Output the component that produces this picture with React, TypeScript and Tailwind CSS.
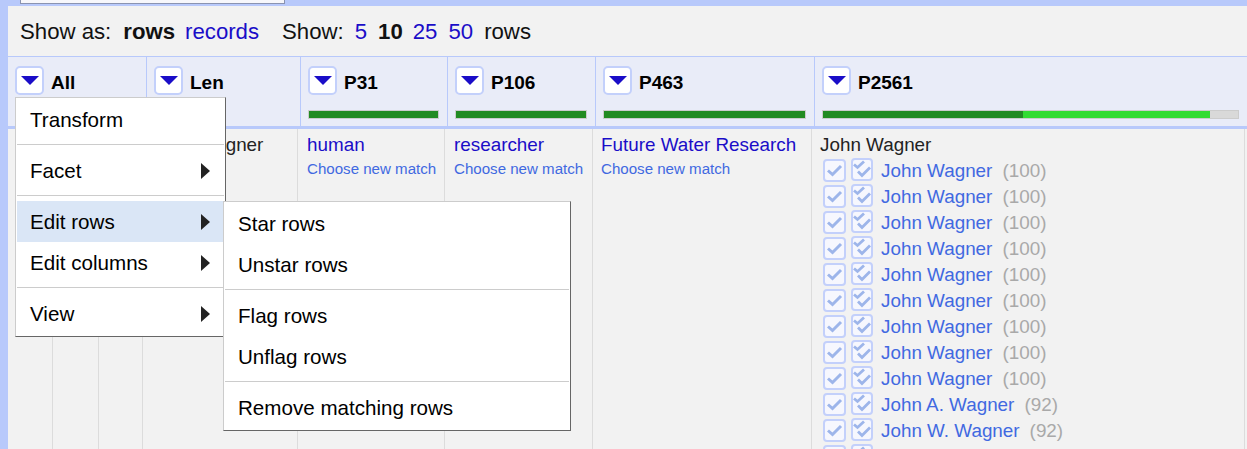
// OpenRefine-style reconciliation grid with the "All" column menu open.
import type { ReactNode } from "react";

const headers = [
  { name: "All", w: "w-[139px]" },
  { name: "Len", w: "w-[154px]" },
  { name: "P31", w: "w-[147px]", bar: true },
  { name: "P106", w: "w-[148px]", bar: true },
  { name: "P463", w: "w-[219px]", bar: true },
];

const candidates = [
  ["John Wagner", 100], ["John Wagner", 100], ["John Wagner", 100],
  ["John Wagner", 100], ["John Wagner", 100], ["John Wagner", 100],
  ["John Wagner", 100], ["John Wagner", 100], ["John Wagner", 100],
  ["John A. Wagner", 92], ["John W. Wagner", 92],
] as const;

function DropButton() {
  return (
    <span className="w-[29px] h-[29px] shrink-0 bg-white border-2 border-[#c3d0fb] rounded-[5px] flex items-center justify-center">
      <span className="w-0 h-0 border-x-[9px] border-x-transparent border-t-[9px] border-t-[#1a0dc8] mt-[-1px]" />
    </span>
  );
}

function HeaderCell({ name, w, bar }: { name: string; w: string; bar?: boolean }) {
  return (
    <div className={`${w} shrink-0 border-r border-[#b8c9fb] pl-[7px] pr-[8px] pt-[9px]`}>
      <div className="flex items-center gap-[7px] h-[29px]">
        <DropButton />
        <span className="font-bold text-[19px] text-black mt-[5px]">{name}</span>
      </div>
      {bar && (
        <div className="mt-[15px] h-[9px] bg-[#d9d9d9] border border-[#ccc]">
          <div className="h-full bg-[#228b22]" />
        </div>
      )}
    </div>
  );
}

function MatchCell({ label }: { label: string }) {
  return (
    <>
      <a className="block text-[18.85px] leading-[21px] text-[#1a0dc8]">{label}</a>
      <a className="block mt-[4px] text-[15.1px] leading-[20px] text-[#4169e1]">Choose new match</a>
    </>
  );
}

function BodyCol({ w, inset, children }: { w: string; inset: string; children?: ReactNode }) {
  return (
    <div className={`${w} ${inset} shrink-0 border-r border-[#dcdcdc] pt-[5px] overflow-hidden`}>{children}</div>
  );
}

function CheckIcon() {
  return (
    <span className="w-[23px] h-[23px] shrink-0 border-2 border-[#c3d0fb] rounded-[4px] bg-[#f6f7fe] flex items-center justify-center mt-[-2px]">
      <svg width="17" height="14" viewBox="0 0 17 14" fill="none" stroke="#9db5ea" strokeWidth="3">
        <path d="M2 7.5 L6.5 11.5 L15 3" />
      </svg>
    </span>
  );
}

function DoubleCheckIcon() {
  return (
    <span className="w-[22px] h-[23px] shrink-0 border-2 border-[#c3d0fb] rounded-[4px] bg-[#f6f7fe] flex items-center justify-center mt-[-4px]">
      <svg width="18" height="19" viewBox="0 0 18 19" fill="none" stroke="#9db5ea" strokeWidth="2.8">
        <path d="M1 4.5 L4.5 7.5 L11 1.5" />
        <path d="M5 11.5 L9 15.5 L17 7.5" />
      </svg>
    </span>
  );
}

function MenuItem({ label, arrow, active }: { label: string; arrow?: boolean; active?: boolean }) {
  return (
    <div className={`h-[41px] ml-px flex items-center justify-between pl-[13px] pr-[15px] text-[20.6px] text-black ${active ? "bg-[#dae6f6]" : ""}`}>
      <span className="mt-[2px]">{label}</span>
      {arrow && <span className="w-0 h-0 border-y-[8px] border-y-transparent border-l-[9px] border-l-[#222]" />}
    </div>
  );
}

function MenuSep() {
  return <div className="h-px bg-[#ccc] mx-px mt-[4px] mb-[5px]" />;
}

export default function App() {
  return (
    <div className="relative w-[1247px] h-[449px] overflow-hidden bg-[#b8c9fb] font-['Liberation_Sans',Arial,sans-serif]">
      {/* tab sliver at the very top */}
      <div className="h-[6px] pl-[20px]">
        <div className="w-[265px] h-[4px] bg-[#f7f7fb] border-x border-b border-[#8a93b0]" />
      </div>

      <div className="ml-[8px] flex flex-col h-[443px]">
        {/* view toolbar */}
        <div className="h-[51px] shrink-0 bg-[#f2f2f2] border-b border-[#b8c9fb] pl-[12px] pt-[2px] flex items-center text-[22.2px] text-[#111] whitespace-pre">
          <span>Show as:</span>
          <span className="ml-[12px] font-bold">rows</span>
          <a className="ml-[10px] text-[#1a0dc8]">records</a>
          <span className="ml-[23px]">Show:</span>
          <a className="ml-[11px] text-[#1a0dc8]">5</a>
          <span className="ml-[11px] font-bold">10</span>
          <a className="ml-[10px] text-[#1a0dc8]">25</a>
          <a className="ml-[11px] text-[#1a0dc8]">50</a>
          <span className="ml-[11px]">rows</span>
        </div>

        {/* column headers */}
        <div className="h-[69px] shrink-0 flex bg-[#e9ecf8]">
          {headers.map((h) => (
            <HeaderCell key={h.name} name={h.name} w={h.w} bar={h.bar} />
          ))}
          <div className="flex-1 pl-[7px] pr-[8px] pt-[9px]">
            <div className="flex items-center gap-[7px] h-[29px]">
              <DropButton />
              <span className="font-bold text-[19px] text-black mt-[5px]">P2561</span>
            </div>
            <div className="mt-[15px] h-[9px] bg-[#d9d9d9] border border-[#ccc] flex">
              <div className="w-[200px] bg-[#228b22]" />
              <div className="w-[187px] bg-[#32dc32]" />
            </div>
          </div>
        </div>

        {/* body */}
        <div className="flex-1 flex bg-[#f2f2f2] border-t-[3px] border-[#b8c9fb] overflow-hidden">
          <div className="w-[45px] shrink-0 border-r border-[#dcdcdc]" />
          <div className="w-[46px] shrink-0 border-r border-[#dcdcdc]" />
          <div className="w-[44px] shrink-0 border-r border-[#dcdcdc]" />
          <BodyCol w="w-[155px]" inset="pl-[9px]">
            <span className="block text-[18.85px] leading-[21px] text-[#222]">John Wagner</span>
          </BodyCol>
          <BodyCol w="w-[147px]" inset="pl-[9px]"><MatchCell label="human" /></BodyCol>
          <BodyCol w="w-[148px]" inset="pl-[9px]"><MatchCell label="researcher" /></BodyCol>
          <BodyCol w="w-[219px]" inset="pl-[8px]"><MatchCell label="Future Water Research" /></BodyCol>
          <div className="w-[433px] shrink-0 border-r border-[#dcdcdc] pl-[8px] pt-[5px]">
            <span className="block text-[18.85px] leading-[21px] text-[#222]">John Wagner</span>
            <ul className="mt-[3px] ml-[3px] flex flex-col">
              {[...candidates, ["", 0] as const].map(([name, score], i) => (
                <li key={i} className="h-[26px] flex items-center gap-[5px] shrink-0">
                  <CheckIcon />
                  <DoubleCheckIcon />
                  {name && (
                    <>
                      <a className="ml-[3px] text-[18.85px] text-[#4169e1]">{name}</a>
                      <span className="ml-[5px] text-[18.85px] text-[#a9a9a9]">({score})</span>
                    </>
                  )}
                </li>
              ))}
            </ul>
          </div>
        </div>
      </div>

      {/* column menu */}
      <div className="absolute left-[15px] top-[97px] w-[211px] h-[240px] bg-white border border-t-[#ccc] border-l-[#ccc] border-r-[#666] border-b-[#666] pt-[1px]">
        <MenuItem label="Transform" />
        <MenuSep />
        <MenuItem label="Facet" arrow />
        <MenuSep />
        <MenuItem label="Edit rows" arrow active />
        <MenuItem label="Edit columns" arrow />
        <MenuSep />
        <MenuItem label="View" arrow />
      </div>

      {/* Edit rows submenu */}
      <div className="absolute left-[223px] top-[201px] w-[348px] h-[230px] bg-white border border-t-[#ccc] border-l-[#ccc] border-r-[#666] border-b-[#666] pt-[1px]">
        <MenuItem label="Star rows" />
        <MenuItem label="Unstar rows" />
        <MenuSep />
        <MenuItem label="Flag rows" />
        <MenuItem label="Unflag rows" />
        <MenuSep />
        <MenuItem label="Remove matching rows" />
      </div>
    </div>
  );
}
